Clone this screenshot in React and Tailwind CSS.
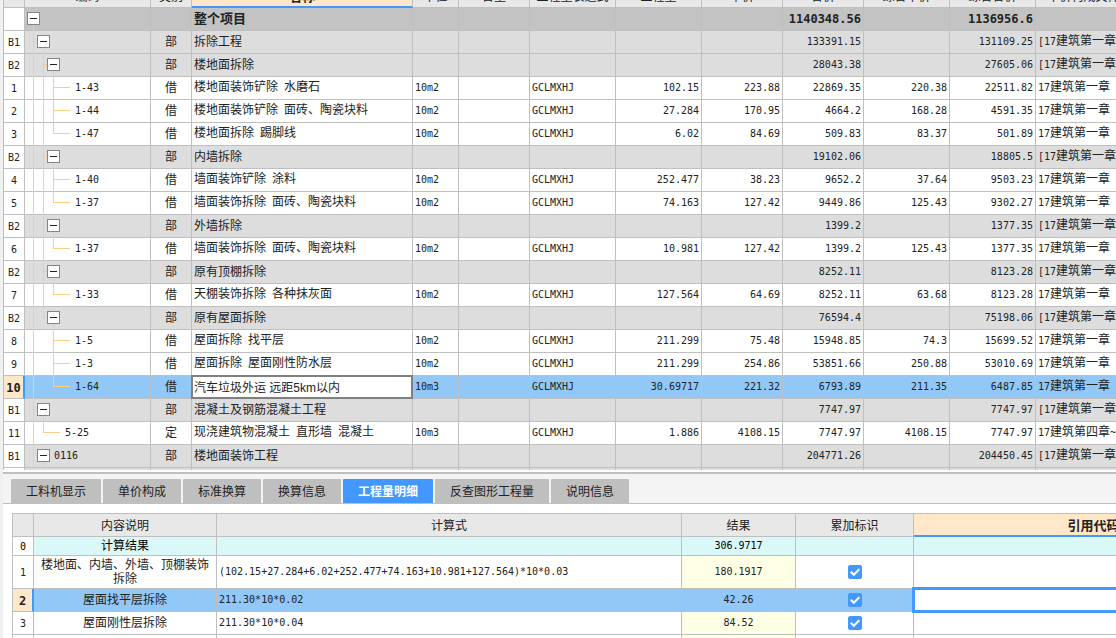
import { useState } from 'react';
import clsx from 'clsx';

const columns = [
  { key: 'index', label: '', width: 'w-[21px]' },
  { key: 'code', label: '编码', width: 'w-[126px]' },
  { key: 'type', label: '类别', width: 'w-[41px]' },
  { key: 'name', label: '名称', width: 'w-[221px]' },
  { key: 'unit', label: '单位', width: 'w-[46px]' },
  { key: 'content', label: '含量', width: 'w-[71px]' },
  { key: 'expr', label: '工程量表达式', width: 'w-[86px]' },
  { key: 'qty', label: '工程量', width: 'w-[86px]' },
  { key: 'price', label: '单价', width: 'w-[81px]' },
  { key: 'total', label: '合价', width: 'w-[81px]' },
  { key: 'unitPrice', label: '综合单价', width: 'w-[86px]' },
  { key: 'sumPrice', label: '综合合价', width: 'w-[86px]' },
  { key: 'file', label: '单价构成文件', width: '' }
];

const group = (index, depth, name, total, sumPrice, code = '') => ({
  index, depth, name, total, sumPrice, code, kind: 'group', type: '部', file: '[17建筑第一章'
});

const item = (index, depth, code, name, unit, qty, price, total, unitPrice, sumPrice) => ({
  index, depth, code, name, unit, qty, price, total, unitPrice, sumPrice,
  kind: 'item', type: '借', expr: 'GCLMXHJ', file: '17建筑第一章'
});

const rows = [
  { index: '', depth: 0, kind: 'root', name: '整个项目', total: '1140348.56', sumPrice: '1136956.6' },
  group('B1', 1, '拆除工程', '133391.15', '131109.25'),
  group('B2', 2, '楼地面拆除', '28043.38', '27605.06'),
  item('1', 3, '1-43', '楼地面装饰铲除 水磨石', '10m2', '102.15', '223.88', '22869.35', '220.38', '22511.82'),
  item('2', 3, '1-44', '楼地面装饰铲除 面砖、陶瓷块料', '10m2', '27.284', '170.95', '4664.2', '168.28', '4591.35'),
  item('3', 3, '1-47', '楼地面拆除 踢脚线', '10m2', '6.02', '84.69', '509.83', '83.37', '501.89'),
  group('B2', 2, '内墙拆除', '19102.06', '18805.5'),
  item('4', 3, '1-40', '墙面装饰铲除 涂料', '10m2', '252.477', '38.23', '9652.2', '37.64', '9503.23'),
  item('5', 3, '1-37', '墙面装饰拆除 面砖、陶瓷块料', '10m2', '74.163', '127.42', '9449.86', '125.43', '9302.27'),
  group('B2', 2, '外墙拆除', '1399.2', '1377.35'),
  item('6', 3, '1-37', '墙面装饰拆除 面砖、陶瓷块料', '10m2', '10.981', '127.42', '1399.2', '125.43', '1377.35'),
  group('B2', 2, '原有顶棚拆除', '8252.11', '8123.28'),
  item('7', 3, '1-33', '天棚装饰拆除 各种抹灰面', '10m2', '127.564', '64.69', '8252.11', '63.68', '8123.28'),
  group('B2', 2, '原有屋面拆除', '76594.4', '75198.06'),
  item('8', 3, '1-5', '屋面拆除 找平层', '10m2', '211.299', '75.48', '15948.85', '74.3', '15699.52'),
  item('9', 3, '1-3', '屋面拆除 屋面刚性防水层', '10m2', '211.299', '254.86', '53851.66', '250.88', '53010.69'),
  item('10', 3, '1-64', '汽车垃圾外运 远距5km以内', '10m3', '30.69717', '221.32', '6793.89', '211.35', '6487.85'),
  group('B1', 1, '混凝土及钢筋混凝土工程', '7747.97', '7747.97'),
  {
    ...item('11', 2, '5-25', '现浇建筑物混凝土 直形墙 混凝土', '10m3', '1.886', '4108.15', '7747.97', '4108.15', '7747.97'),
    type: '定',
    file: '17建筑第四章~'
  },
  group('B1', 1, '楼地面装饰工程', '204771.26', '204450.45', '0116'),
  { index: '', depth: 2, kind: 'group' },
  { index: '', depth: 1, kind: 'group' }
];

const tabs = ['工料机显示', '单价构成', '标准换算', '换算信息', '工程量明细', '反查图形工程量', '说明信息'];

const initialDetails = [
  { index: '1', desc: '楼地面、内墙、外墙、顶棚装饰拆除', formula: '(102.15+27.284+6.02+252.477+74.163+10.981+127.564)*10*0.03', result: '180.1917', checked: true, height: 'h-[33px]' },
  { index: '2', desc: '屋面找平层拆除', formula: '211.30*10*0.02', result: '42.26', checked: true, height: 'h-[23px]' },
  { index: '3', desc: '屋面刚性层拆除', formula: '211.30*10*0.04', result: '84.52', checked: true, height: 'h-[23px]' },
  { index: '', desc: '', formula: '', result: '', checked: null, height: 'h-[23px]' }
];

const cell = 'border-r border-b border-[#bfbfbf]';
const textCell = `${cell} px-0.5 pt-0 pb-0.5`;

// Latin runs are set in a half-width mono face, the rest in the CJK font
const Mixed = ({ text = '', bold }) =>
  text.split(/([\x20-\x7e]+)/).map((part, i) =>
    i % 2 ? (
      <span key={i} className={clsx("whitespace-pre font-['DejaVu_Sans_Mono',monospace]", bold ? 'text-[12px]' : 'text-[10px]')}>
        {part}
      </span>
    ) : (
      part
    )
  );

const hasSibling = (i, depth) => {
  for (let j = i + 1; j < rows.length; j++) {
    if (rows[j].depth < depth) return false;
    if (rows[j].depth === depth) return true;
  }
  return false;
};

const TreeLines = ({ i }) => {
  const { depth, kind } = rows[i];
  const x = (level) => 8 + level * 10;
  const lines = [];
  for (let level = 0; level < depth; level++) {
    const more = hasSibling(i, level + 1);
    if (more || level === depth - 1) {
      lines.push(<rect key={level} x={x(level)} y="0" width="1" height={more ? 23 : 11} />);
    }
  }
  if (depth > 0) {
    lines.push(<rect key="tick" x={x(depth - 1)} y="10" width={kind === 'item' ? 17 : 8} height="1" />);
  }
  if (rows[i + 1] && rows[i + 1].depth > depth) {
    lines.push(<rect key="down" x={x(depth)} y="11" width="1" height="12" />);
  }
  return (
    <svg width="60" height="23" fill="#ffcc85" shapeRendering="crispEdges" className="col-start-1 row-start-1 -mb-px block" aria-hidden="true">
      {lines}
    </svg>
  );
};

const CodeCell = ({ i }) => {
  const row = rows[i];
  const isItem = row.kind === 'item';
  return (
    <div className="grid h-[22px] grid-cols-1">
      <TreeLines i={i} />
      <div
        className="z-10 col-start-1 row-start-1 flex h-[22px] items-center gap-1 pb-px"
        style={{ paddingLeft: (isItem ? 20 : 2) + row.depth * 10 }}
      >
        {!isItem && (
          <button type="button" aria-label="折叠" className="grid size-[13px] shrink-0 place-items-center border border-[#858585] bg-white">
            <span className="h-px w-[7px] bg-[#222]" />
          </button>
        )}
        <span className="pb-0.5"><Mixed text={row.code} /></span>
      </div>
    </div>
  );
};

const rowColor = (row, selected) => {
  if (selected) return 'bg-[#92c8f7]';
  if (row.kind === 'root') return 'bg-[#c3c3c3] text-[13px] font-bold';
  if (row.kind === 'group') return 'bg-[#dddddd]';
  return 'bg-white';
};

const BudgetTable = () => {
  const [name, setName] = useState('汽车垃圾外运 远距5km以内');

  return (
    <table className="-mt-[15px] w-full min-w-[1129px] table-fixed border-separate border-spacing-0 border-l border-[#bfbfbf]">
      <colgroup>
        {columns.map((c) => <col key={c.key} className={c.width} />)}
      </colgroup>
      <thead>
        <tr className="h-[23px] bg-[#e8e8e8]">
          {columns.map((c) => (
            <th
              key={c.key}
              className={clsx(
                'border-r p-0',
                c.key === 'name'
                  ? 'border-b-2 border-r-[#bfbfbf] border-b-[#4398ff] bg-[#ffe7c9] text-[13px] font-bold'
                  : 'border-b border-[#bfbfbf] font-normal'
              )}
            >
              {c.label}
            </th>
          ))}
        </tr>
      </thead>
      <tbody>
        {rows.map((row, i) => {
          const selected = row.index === '10';
          return (
            <tr key={i} className={clsx('h-[23px] whitespace-nowrap', rowColor(row, selected))}>
              {columns.map((c) => {
                if (c.key === 'index') {
                  return (
                    <td
                      key={c.key}
                      className={clsx(
                        'border-b border-b-[#bfbfbf] p-0 text-center',
                        selected ? 'border-r-2 border-r-[#4398ff] bg-[#ffe7c9] font-bold' : 'border-r border-r-[#bfbfbf] bg-white'
                      )}
                    >
                      <Mixed text={row.index} bold={selected} />
                    </td>
                  );
                }
                if (c.key === 'code') {
                  return <td key={c.key} className={clsx(cell, 'p-0')}><CodeCell i={i} /></td>;
                }
                if (c.key === 'name' && selected) {
                  return (
                    <td key={c.key} className={clsx(cell, 'p-0')}>
                      <input
                        aria-label="名称"
                        value={name}
                        onChange={(e) => setName(e.target.value)}
                        className="block h-[22px] w-full bg-white pb-0.5 pl-0.5 font-['Liberation_Sans','Noto_Sans_CJK_SC',sans-serif] outline-2 -outline-offset-1 outline-[#7f7f7f]"
                      />
                    </td>
                  );
                }
                return (
                  <td
                    key={c.key}
                    className={clsx(
                      textCell,
                      'overflow-hidden',
                      c.key === 'type' && 'text-center',
                      ['qty', 'price', 'total', 'unitPrice', 'sumPrice'].includes(c.key) && 'text-right'
                    )}
                  >
                    <Mixed text={row[c.key]} bold={row.kind === 'root'} />
                  </td>
                );
              })}
            </tr>
          );
        })}
      </tbody>
    </table>
  );
};

const CheckBox = ({ checked, onChange, label }) => (
  <span className="mx-auto grid size-[14px] grid-cols-1">
    <input
      type="checkbox"
      aria-label={label}
      checked={checked}
      onChange={onChange}
      className="col-start-1 row-start-1 size-[14px] appearance-none rounded-[2px] border border-[#4398ff] bg-white checked:bg-[#4398ff]"
    />
    {checked && (
      <svg viewBox="0 0 14 14" className="pointer-events-none z-10 col-start-1 row-start-1 size-[14px]" fill="none" stroke="white" strokeWidth="2">
        <path d="M2.8 6.8 L5.8 9.8 L11.3 4.2" />
      </svg>
    )}
  </span>
);

const DetailTable = () => {
  const [details, setDetails] = useState(initialDetails);
  const [refCode, setRefCode] = useState('');

  const toggle = (index) => {
    setDetails(details.map((d) => (d.index === index ? { ...d, checked: !d.checked } : d)));
  };

  return (
    <table className="w-full min-w-[1261px] table-fixed border-separate border-spacing-0 border-t border-l border-[#bfbfbf] text-center leading-[14px]">
      <colgroup>
        <col className="w-[21px]" />
        <col className="w-[183px]" />
        <col className="w-[465px]" />
        <col className="w-[114px]" />
        <col className="w-[118px]" />
        <col />
      </colgroup>
      <thead>
        <tr className="h-[23px] bg-[#e8e8e8]">
          <th className={clsx(cell, 'p-0')}></th>
          <th className={clsx(cell, 'p-0 font-normal')}>内容说明</th>
          <th className={clsx(cell, 'p-0 font-normal')}>计算式</th>
          <th className={clsx(cell, 'p-0 font-normal')}>结果</th>
          <th className={clsx(cell, 'p-0 font-normal')}>累加标识</th>
          <th className="border-b-2 border-[#4398ff] bg-[#ffe7c9] p-0 text-[13px] font-bold">引用代码</th>
        </tr>
      </thead>
      <tbody>
        <tr className="h-[19px] bg-[#dbf8f8] text-black">
          <td className={clsx(cell, 'bg-white p-0')}><Mixed text="0" /></td>
          <td className={textCell}>计算结果</td>
          <td className={textCell}></td>
          <td className={textCell}><Mixed text="306.9717" /></td>
          <td className={textCell}></td>
          <td className={textCell}></td>
        </tr>
        {details.map((d, i) => {
          const selected = d.index === '2';
          return (
            <tr key={i} className={clsx(d.height, selected ? 'bg-[#92c8f7]' : 'bg-white')}>
              <td
                className={clsx(
                  'border-b border-b-[#bfbfbf] p-0',
                  selected ? 'border-r-2 border-r-[#4398ff] bg-[#ffe7c9] font-bold' : 'border-r border-r-[#bfbfbf]'
                )}
              >
                <Mixed text={d.index} bold={selected} />
              </td>
              <td className={textCell}>{d.desc}</td>
              <td className={clsx(textCell, 'text-left')}><Mixed text={d.formula} /></td>
              <td className={clsx(textCell, !selected && 'bg-[#ffffe6]')}><Mixed text={d.result} /></td>
              <td className={clsx(cell, 'p-0')}>
                {d.checked !== null && (
                  <CheckBox checked={d.checked} onChange={() => toggle(d.index)} label={`累加标识 ${d.index}`} />
                )}
              </td>
              <td className={clsx(cell, 'p-0')}>
                {selected && (
                  <input
                    aria-label="引用代码"
                    value={refCode}
                    onChange={(e) => setRefCode(e.target.value)}
                    className="block h-[22px] w-full bg-white px-1 outline-3 -outline-offset-1 outline-[#4398ff]"
                  />
                )}
              </td>
            </tr>
          );
        })}
      </tbody>
    </table>
  );
};

const App = () => {
  const [activeTab, setActiveTab] = useState('工程量明细');

  return (
    <div className="flex h-screen flex-col overflow-hidden bg-[#f0f0f0] pl-[3px] font-['Noto_Sans_CJK_SC',sans-serif] text-[12px] leading-4 text-[#222]">
      <div className="flex min-h-0 flex-1 flex-col bg-white pb-0.5">
        <div className="min-h-0 flex-1 overflow-hidden">
          <BudgetTable />
        </div>
      </div>

      <div className="h-[166px] shrink-0 overflow-hidden border-t-2 border-[#bfbfbf] bg-white">
        <div role="tablist" className="flex gap-0.5 border-b border-[#bfbfbf] bg-[#f4f4f4] pt-[5px] pl-2">
          {tabs.map((tab) => (
            <button
              key={tab}
              type="button"
              role="tab"
              aria-selected={tab === activeTab}
              onClick={() => setActiveTab(tab)}
              className={clsx(
                'h-6 rounded-t-[1px] px-[15px]',
                tab === activeTab ? 'bg-[#4398ff] font-bold text-white' : 'bg-[#bfbfbf]'
              )}
            >
              {tab}
            </button>
          ))}
        </div>
        <div className="pt-[9px] pl-[9px]">
          <DetailTable />
        </div>
      </div>
    </div>
  );
};

export default App;
